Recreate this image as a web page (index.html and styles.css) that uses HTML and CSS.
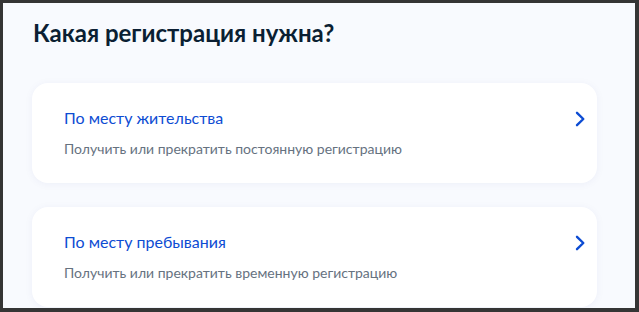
FILE: index.html
```html
<!DOCTYPE html>
<html lang="ru">
<head>
    <meta charset="UTF-8">
    <meta name="viewport" content="width=device-width, initial-scale=1.0">
    <title>Регистрация</title>
    <link rel="stylesheet" href="styles.css">
</head>
<body>
    <div class="frame">
        <h1 class="heading">Какая регистрация нужна?</h1>

        <div class="options">
            <a class="option" href="#">
                <div class="option-head">
                    <span class="option-title">По месту жительства</span>
                    <svg class="chevron" width="12" height="16" viewBox="0 0 12 16">
                        <path d="M3 1.8 L9.3 8 L3 14.2" />
                    </svg>
                </div>
                <div class="option-text">Получить или прекратить постоянную регистрацию</div>
            </a>

            <a class="option" href="#">
                <div class="option-head">
                    <span class="option-title">По месту пребывания</span>
                    <svg class="chevron" width="12" height="16" viewBox="0 0 12 16">
                        <path d="M3 1.8 L9.3 8 L3 14.2" />
                    </svg>
                </div>
                <div class="option-text">Получить или прекратить временную регистрацию</div>
            </a>
        </div>
    </div>
</body>
</html>
```

FILE: styles.css
```css
html, body {
    margin: 0;
    height: 100%;
}

body {
    font-family: Lato, "Noto Sans", Arial, sans-serif;
    background: #353535;
}

.frame {
    box-sizing: border-box;
    height: 312px;
    border-style: solid;
    border-color: #353535;
    border-width: 3px 4px 4px 3px;
    background: #f8fafe;
    padding: 14px 38px 0 29px;
    overflow: hidden;
}

.heading {
    margin: 0 0 34px 1px;
    font-size: 24px;
    line-height: 32px;
    font-weight: 700;
    color: #0b1f33;
}

.options {
    display: flex;
    flex-direction: column;
    gap: 24px;
}

.option {
    display: flex;
    flex-direction: column;
    gap: 9px;
    padding: 23px 11px 24px 32px;
    background: #ffffff;
    border-radius: 16px;
    box-shadow: 0 1px 8px rgba(0, 40, 140, 0.05);
    text-decoration: none;
}

.option-head {
    display: flex;
    align-items: center;
    justify-content: space-between;
}

.option-title {
    font-size: 16px;
    line-height: 24px;
    color: #0d4cd3;
}

.chevron {
    margin-top: 1px;
}

.chevron path {
    fill: none;
    stroke: #0d4cd3;
    stroke-width: 2.4;
    stroke-linecap: round;
    stroke-linejoin: round;
}

.option-text {
    font-size: 14px;
    line-height: 20px;
    color: #66727f;
}
```
